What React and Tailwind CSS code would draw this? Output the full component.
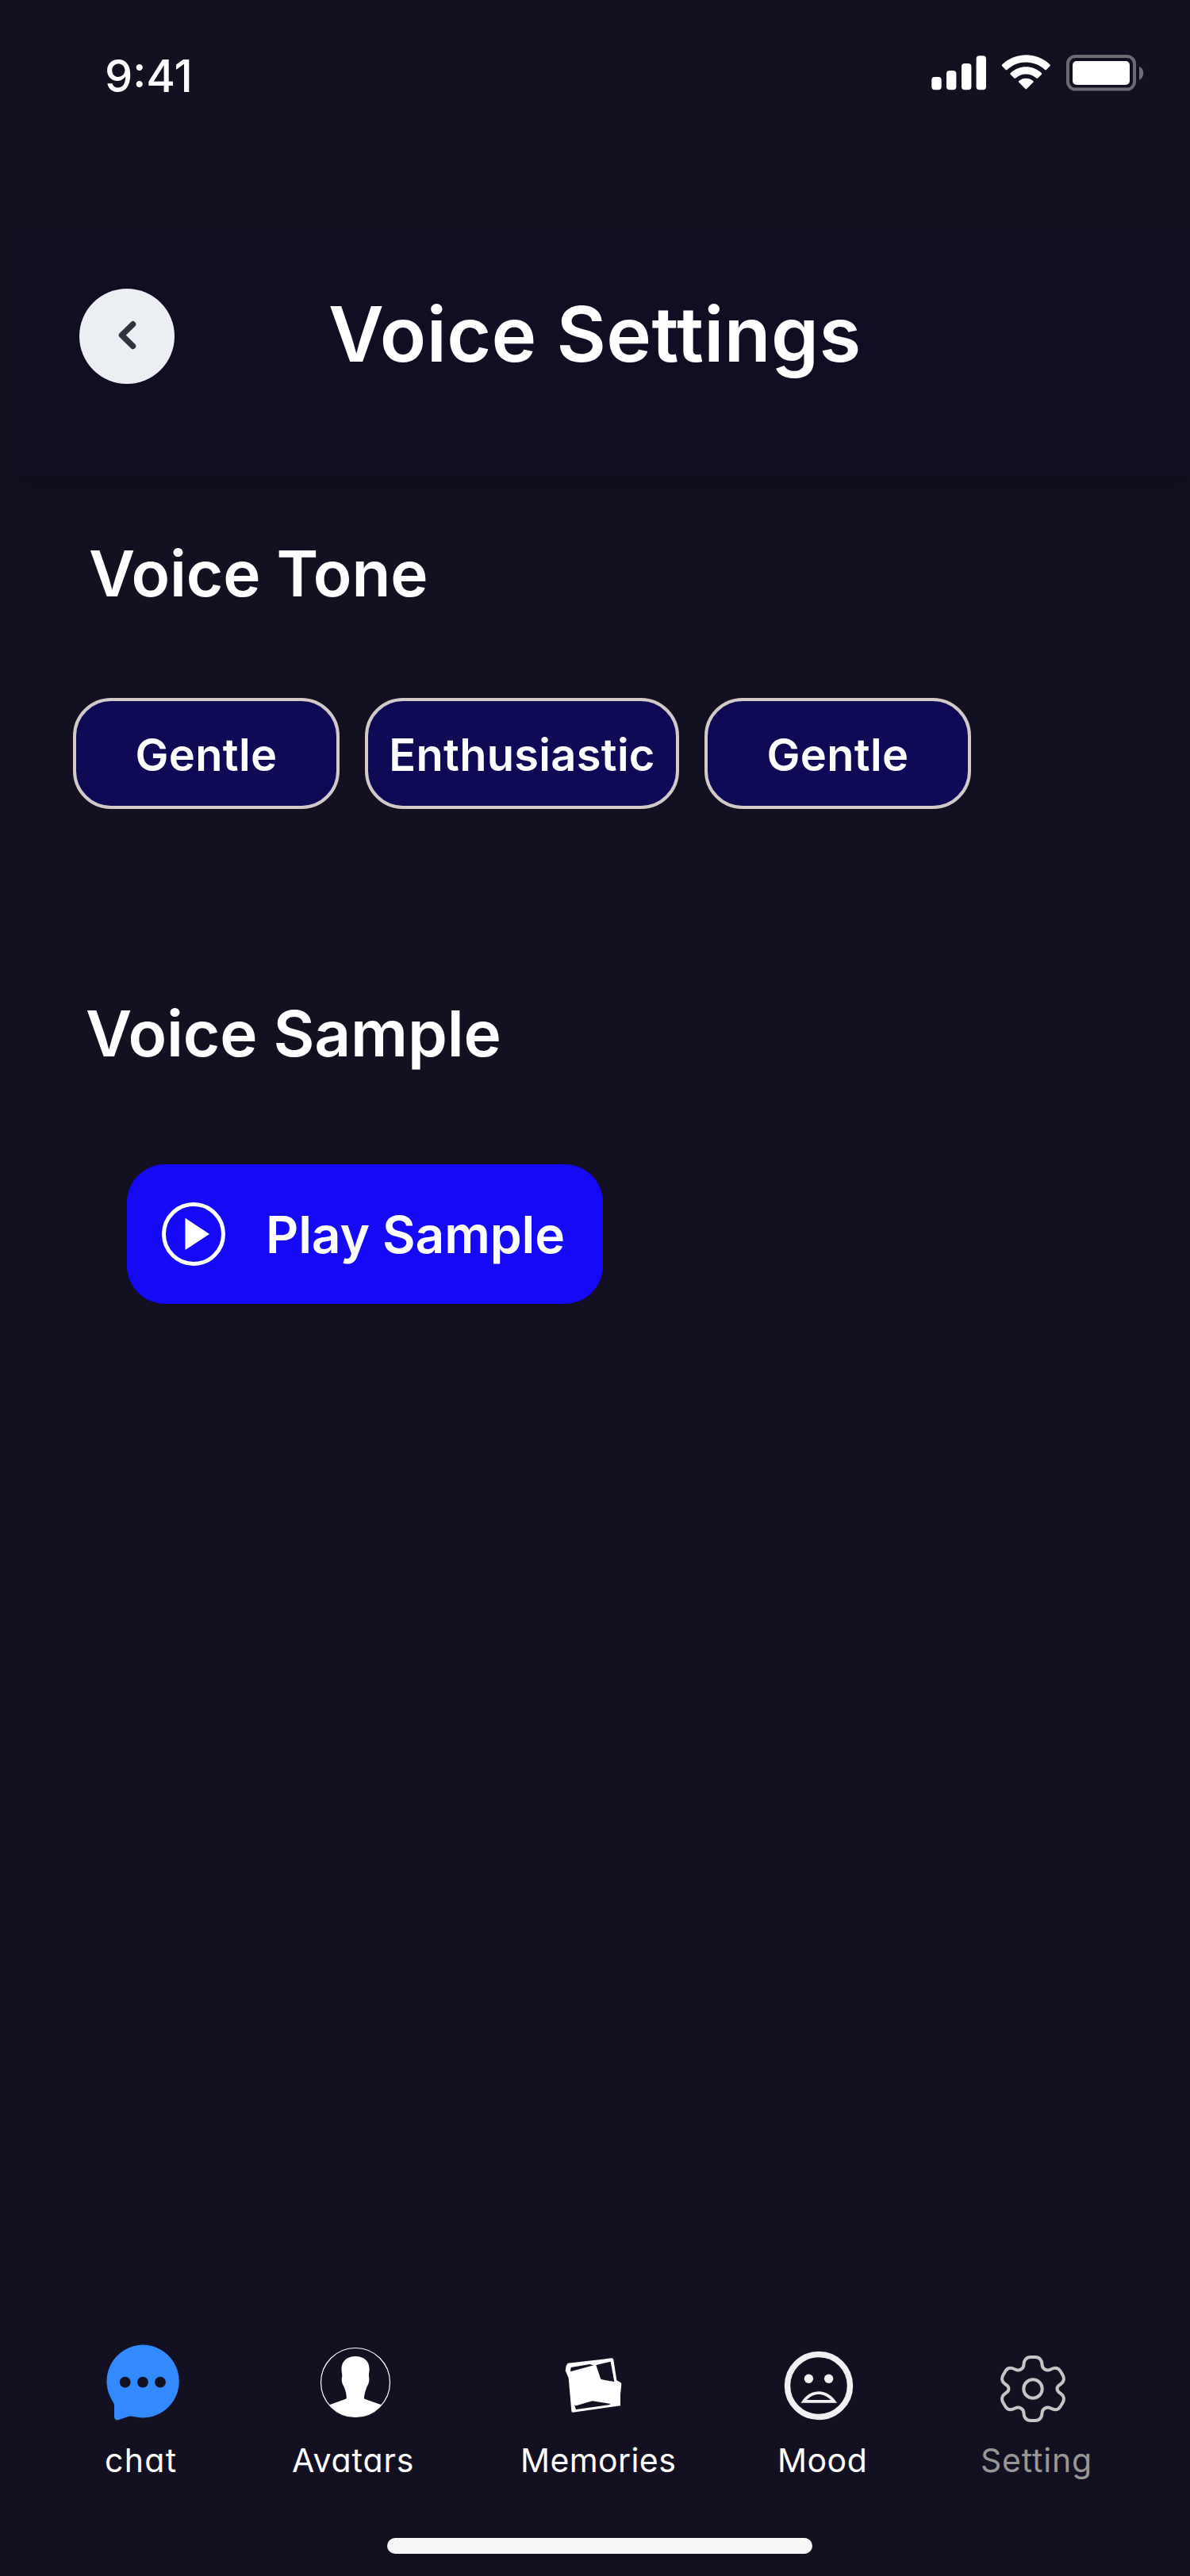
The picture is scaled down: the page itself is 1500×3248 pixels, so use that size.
const inter = "font-['Inter',sans-serif]";

function StatusBar() {
  return (
    <div className="flex h-72 justify-between pl-[132px] pr-[57px]">
      <span className="mt-[62px] h-[68px] text-[56px] leading-[68px] font-medium">9:41</span>
      <svg className="mt-[64px]" width="270" height="56" viewBox="1173 64 270 56" fill="white">
        <rect x="1174.3" y="97" width="12.4" height="16.3" rx="4" />
        <rect x="1193" y="89" width="12.4" height="24.3" rx="4" />
        <rect x="1212" y="80" width="12.4" height="33.3" rx="4" />
        <rect x="1230.6" y="70.3" width="12.4" height="43" rx="4" />
        <path d="M1293.3 78.4c8.9 0 17.400 3.400 23.800 9.500.5.5 1.300.5 1.800 0l4.600-4.700c.5-.5.5-1.300 0-1.800-16.900-16.200-43.500-16.200-60.400 0-.5.5-.5 1.300 0 1.800l4.600 4.700c.5.5 1.300.5 1.800 0 6.400-6.100 14.900-9.500 23.800-9.500z" />
        <path d="M1293.300 93.500c4.800 0 9.500 1.800 13.100 5.100.5.5 1.300.5 1.800 0l4.600-4.700c.5-.5.5-1.300 0-1.800-11-10.400-28-10.400-39 0-.5.5-.5 1.300 0 1.800l4.600 4.700c.5.5 1.300.5 1.800 0 3.600-3.300 8.300-5.100 13.100-5.100z" />
        <path d="M1302.300 103.800c.5-.5.5-1.300 0-1.800-5.200-4.500-12.800-4.500-18 0-.5.500-.5 1.300 0 1.800l8.100 8.200c.5.5 1.300.5 1.800 0z" />
        <rect x="1346" y="71" width="84" height="41.600" rx="9.500" fill="none" stroke="white" strokeOpacity=".38" strokeWidth="4" />
        <rect x="1352" y="77" width="72" height="30" rx="5" />
        <path d="M1436 84c7 2.500 7 14 0 16.500z" opacity=".4" />
      </svg>
    </div>
  );
}

function Header() {
  return (
    <header className="ml-5 flex h-[312px] items-start bg-[#110d22] pl-20 shadow-[0_10px_28px_rgba(0,0,0,0.22)]">
      <button className="mt-[76px] flex size-[120px] items-center justify-center rounded-full bg-[#ebeff3]">
        <svg width="120" height="120" viewBox="0 0 120 120" fill="none" stroke="#30343e" strokeWidth="7.500" strokeLinecap="round" strokeLinejoin="round">
          <path d="M67.500 44.800 53.500 58.600l14 13.800" />
        </svg>
      </button>
      <h1 className="mt-[75px] ml-[194px] text-[96px] leading-[116px] font-semibold tracking-[0.45px] whitespace-nowrap">Voice Settings</h1>
    </header>
  );
}

const tones = [
  { label: "Gentle", width: "w-[336px]" },
  { label: "Enthusiastic", width: "w-[396px]" },
  { label: "Gentle", width: "w-[336px]" },
];

function ChatIcon() {
  return (
    <svg width="92" height="96" viewBox="134 2956 92 96">
      <path d="M180 2956.500a46 46 0 1 1-11.500 90.600q-3.500-1.300-7-.2l-11.500 4.200q-5.800 1.600-6-4.600v-13q0-3-2-5.800A46 46 0 0 1 180 2956.500z" fill="#338aff" />
      <circle cx="157.700" cy="3003.700" r="6.900" fill="#131021" />
      <circle cx="180" cy="3003.700" r="6.900" fill="#131021" />
      <circle cx="202" cy="3003.700" r="6.900" fill="#131021" />
    </svg>
  );
}

function AvatarIcon() {
  return (
    <svg width="90" height="90" viewBox="403 2958.700 90 90">
      <circle cx="448" cy="3003.700" r="43.500" fill="none" stroke="white" strokeWidth="1.200" />
      <path d="M448 2970.700c11.500 0 18 7 17.600 17-.2 4-1 5.500-.6 8.500 1.200 5.500-.5 9.800-2.700 13.300-1.600 4.500-3.300 9.500-3.300 14 0 .8.600 1 1.300 1.300l20.700 7.200a44 44 0 0 1-66 0l20.200-7.200c1-.5 1.500-.8 1.600-1.800 0-5-1.400-9.500-3.300-14-2.200-3.500-3.600-7.800-2.300-12.800.3-3-.5-4.500-.7-8.500-.5-10 6-17 17.500-17z" fill="white" />
    </svg>
  );
}

function MemoriesIcon() {
  return (
    <svg width="72" height="72" viewBox="21 21 216 216">
      <path d="M32 44 198 25q6 0 7 6l12 78 15 8q3 2 3 8l-4 38v42l-180 25q-5 0-5-5l-11-125-12-28 3-18z" fill="white" />
      <path d="M44 60 115 48l15 4-88 24z" fill="#131021" />
      <path d="M139 51 194 38l14 76-47-8q-4-1-5-4z" fill="#131021" />
      <path d="M57 202q4 4 9 2l59-17 70 11-8 4-124 17z" fill="#131021" />
    </svg>
  );
}

function MoodIcon() {
  return (
    <svg width="88" height="88" viewBox="988 2963.500 88 88">
      <circle cx="1032" cy="3007.500" r="39.500" fill="none" stroke="#f3f0f2" strokeWidth="7.500" />
      <circle cx="1019.400" cy="2998.700" r="5.700" fill="#f3f0f2" />
      <circle cx="1044.600" cy="2998.700" r="5.700" fill="#f3f0f2" />
      <path d="M1009.500 3029.300c11-19.500 34-19.500 45.500 0zM1017 3025.500h30c-8.500-9.500-21.500-9.500-30 0z" fill="#f3f0f2" fillRule="evenodd" />
    </svg>
  );
}

function GearIcon() {
  return (
    <svg width="84" height="88" viewBox="1260 2968 84 88" fill="none" stroke="#c5c5c5" strokeWidth="4">
      <path d="M1299 2972h6c5 0 8.500 4 8.500 9 0 6 6 9 11 6.500 5-2.600 9.500-2 12 2l3 5c2.500 4.500 1.500 9-2.500 11.500-6 3.500-6 8.500 0 12 4 2.500 5 7 2.500 11.500l-3 5c-2.500 4-7 4.600-12 2-5-2.500-11 .5-11 6.500 0 5-3.500 9-8.500 9h-6c-5 0-8.500-4-8.500-9 0-6-6-9-11-6.500-5 2.600-9.500 2-12-2l-3-5c-2.500-4.500-1.500-9 2.500-11.500 6-3.500 6-8.500 0-12-4-2.500-5-7-2.500-11.500l3-5c2.500-4 7-4.600 12-2 5 2.500 11-.5 11-6.500 0-5 3.500-9 8.500-9z" />
      <circle cx="1302" cy="3012" r="11.700" />
    </svg>
  );
}

const navLabel = "mt-auto mb-[9px] block h-12 whitespace-nowrap text-[41px] leading-[48px] [font-feature-settings:'cv11']";

function BottomNav() {
  return (
    <nav className="mt-auto flex h-[180px] pt-px pl-[132px]">
      <a className="flex w-[237px] flex-col">
        <span className="ml-[2px]"><ChatIcon /></span>
        <span className={navLabel + " tracking-[1.3px]"}>chat</span>
      </a>
      <a className="flex w-[286px] flex-col">
        <span className="mt-[3px] ml-[34px]"><AvatarIcon /></span>
        <span className={navLabel + " -ml-px tracking-[0.9px]"}>Avatars</span>
      </a>
      <a className="flex w-[325px] flex-col">
        <span className="mt-4 ml-[57px]"><MemoriesIcon /></span>
        <span className={navLabel + " ml-px tracking-[0.4px]"}>Memories</span>
      </a>
      <a className="flex w-[256px] flex-col">
        <span className="mt-2 ml-2"><MoodIcon /></span>
        <span className={navLabel + " tracking-[0.5px]"}>Mood</span>
      </a>
      <a className="flex flex-col">
        <span className="mt-3 ml-6"><GearIcon /></span>
        <span className={navLabel + " tracking-[0.8px] text-[#989797]"}>Setting</span>
      </a>
    </nav>
  );
}

export default function App() {
  return (
    <div className={"flex h-[3248px] w-[1500px] flex-col overflow-hidden bg-[#131021] text-white " + inter}>
      <StatusBar />
      <Header />
      <main>
        <h2 className="mt-[74px] ml-[112px] text-[80px] leading-[98px] font-semibold tracking-[-0.15px]">Voice Tone</h2>
        <div className="mt-[108px] ml-[92px] flex gap-8">
          {tones.map((tone, i) => (
            <button key={i} className={"flex h-[140px] items-center justify-center rounded-[48px] border-4 border-[#d3c9c9] bg-[#0e0a56] pt-[3px] text-[56px] font-semibold tracking-[0.3px] " + tone.width}>
              {tone.label}
            </button>
          ))}
        </div>
        <h2 className="mt-[234px] ml-[108px] text-[80px] leading-[98px] font-semibold tracking-[-0.15px]">Voice Sample</h2>
        <button className="mt-[116px] ml-40 flex h-44 w-[600px] items-center rounded-[48px] bg-[#140af5] pl-11">
          <svg width="80" height="80" viewBox="0 0 80 80">
            <circle cx="40" cy="40" r="37.500" fill="none" stroke="white" strokeWidth="5" />
            <path d="M29.500 19.700 60 40 29.500 60z" fill="white" />
          </svg>
          <span className="ml-[51px] pt-px text-[64px] font-semibold tracking-[-0.1px] whitespace-nowrap">Play Sample</span>
        </button>
      </main>
      <BottomNav />
      <div className="mt-[65px] mb-7 ml-[488px] h-5 w-[536px] shrink-0 rounded-full bg-[#f7f7f7]" />
    </div>
  );
}
